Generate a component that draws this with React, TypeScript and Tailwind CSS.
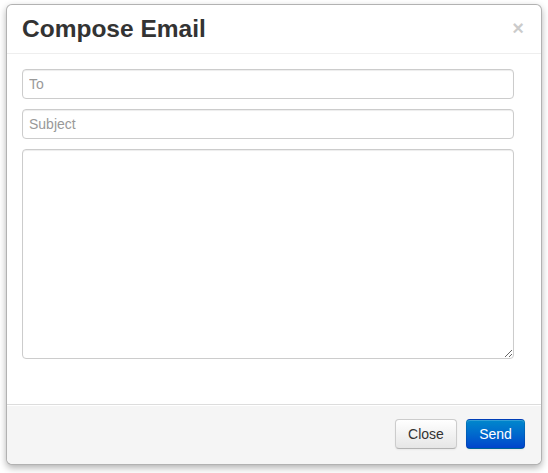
import React from "react";

export default function App() {
  return (
    <div className="w-[548px] h-[473px] bg-white pt-[4px] pl-[6px] font-['Liberation_Sans',Arial,sans-serif] text-[14px] text-[#333]">
      <div className="w-[536px] rounded-[6px] border border-[rgba(0,0,0,0.3)] bg-white shadow-[0_3px_7px_rgba(0,0,0,0.3)]">
        <div className="flex items-center justify-between h-[49px] px-[15px] border-b border-[#eee]">
          <h3 className="text-[24.5px] leading-[30px] font-bold text-[#333] m-0">Compose Email</h3>
          <button className="text-[20px] font-bold leading-[20px] text-black opacity-20 -mt-[3px] mr-[2px]">×</button>
        </div>
        <div className="pt-[15px] px-[15px] pb-[45px] flex flex-col gap-[10px]">
          <input
            placeholder="To"
            className="w-[492px] h-[30px] px-[6px] py-[4px] border border-[#ccc] rounded-[4px] text-[14px] text-[#555] placeholder:text-[#999] shadow-[inset_0_1px_1px_rgba(0,0,0,0.075)] outline-none"
          />
          <input
            placeholder="Subject"
            className="w-[492px] h-[30px] px-[6px] py-[4px] border border-[#ccc] rounded-[4px] text-[14px] text-[#555] placeholder:text-[#999] shadow-[inset_0_1px_1px_rgba(0,0,0,0.075)] outline-none"
          />
          <textarea
            className="block w-[492px] h-[210px] px-[6px] py-[4px] border border-[#ccc] rounded-[4px] text-[14px] text-[#555] shadow-[inset_0_1px_1px_rgba(0,0,0,0.075)] outline-none resize"
          />
        </div>
        <div className="flex justify-end gap-[9px] pt-[14px] pb-[15px] pl-[15px] pr-[16px] bg-[#f5f5f5] border-t border-[#ddd] rounded-b-[6px] shadow-[inset_0_1px_0_#fff]">
          <button className="h-[30px] w-[62px] rounded-[4px] border border-[#ccc] border-b-[#b3b3b3] bg-gradient-to-b from-white to-[#e6e6e6] text-[14px] text-[#333] shadow-[inset_0_1px_0_rgba(255,255,255,0.2),0_1px_2px_rgba(0,0,0,0.05)]">
            Close
          </button>
          <button className="h-[30px] w-[59px] rounded-[4px] border border-[rgba(0,0,0,0.1)] border-b-[rgba(0,0,0,0.25)] bg-gradient-to-b from-[#0088cc] to-[#0044cc] text-[14px] text-white shadow-[inset_0_1px_0_rgba(255,255,255,0.2),0_1px_2px_rgba(0,0,0,0.05)]">
            Send
          </button>
        </div>
      </div>
    </div>
  );
}
